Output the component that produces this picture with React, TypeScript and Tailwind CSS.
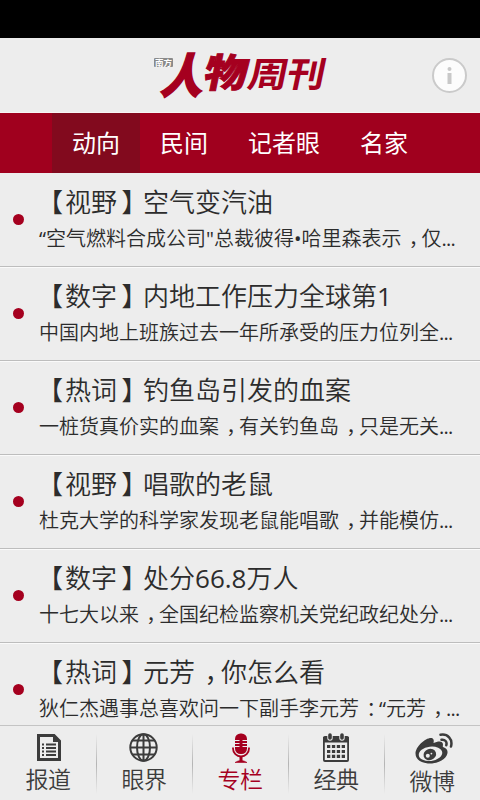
import type { ReactNode } from 'react';

const tabs = ['动向', '民间', '记者眼', '名家'];

const articles = [
  { title: '【视野】空气变汽油', summary: '“空气燃料合成公司"总裁彼得•哈里森表示，仅...' },
  { title: '【数字】内地工作压力全球第1', summary: '中国内地上班族过去一年所承受的压力位列全...' },
  { title: '【热词】钓鱼岛引发的血案', summary: '一桩货真价实的血案，有关钓鱼岛，只是无关...' },
  { title: '【视野】唱歌的老鼠', summary: '杜克大学的科学家发现老鼠能唱歌，并能模仿...' },
  { title: '【数字】处分66.8万人', summary: '十七大以来，全国纪检监察机关党纪政纪处分...' },
  { title: '【热词】元芳，你怎么看', summary: '狄仁杰遇事总喜欢问一下副手李元芳：“元芳，...' },
];

const navItems = [
  { label: '报道', icon: <ReportIcon /> },
  { label: '眼界', icon: <GlobeIcon /> },
  { label: '专栏', icon: <MicIcon />, active: true },
  { label: '经典', icon: <CalendarIcon /> },
  { label: '微博', icon: <WeiboIcon />, low: true },
];

// Half-width glyphs, each padded back to a full em
const punctuation: Record<string, string> = {
  '，': "inline-block w-[1em] pl-[0.36em] [font-feature-settings:'halt']",
  '：': "inline-block w-[1em] pl-[0.36em] [font-feature-settings:'halt']",
  '【': "inline-block w-[1em] pl-[0.42em] [font-feature-settings:'halt']",
  '】': "inline-block w-[1em] pl-[0.17em] [font-feature-settings:'halt']",
  '...': 'font-normal -tracking-[0.8px]',
};

export default function App() {
  return (
    <div className="w-[480px] h-[800px] flex flex-col overflow-hidden bg-[#ededed] text-[#2c2c2c] font-[350] font-['Open_Sans','Noto_Sans_CJK_SC',sans-serif]">
      <div className="h-[38px] shrink-0 bg-black" />
      <Header />
      <nav className="h-[60px] shrink-0 flex justify-center bg-[#a0001e]">
        {tabs.map((tab, i) => (
          <button
            key={tab}
            className={`px-5 text-[24px] leading-[60px] font-normal text-white whitespace-nowrap ${i === 0 ? 'bg-[#820a1e]' : ''}`}
          >
            {tab}
          </button>
        ))}
      </nav>
      <main className="flex-1 min-h-0 overflow-hidden">
        {articles.map(a => (
          <ArticleRow key={a.title} title={a.title} summary={a.summary} />
        ))}
      </main>
      <footer className="h-[75px] shrink-0 flex border-t border-[#c4c4c4]">
        {navItems.map((item, i) => (
          <NavItem key={item.label} label={item.label} icon={item.icon} active={item.active} low={item.low} divider={i > 0} />
        ))}
      </footer>
    </div>
  );
}

function Header() {
  return (
    <header className="h-[75px] shrink-0 flex items-center border-b border-[#f8f4f4]">
      <div className="w-[140px]" />
      <Logo />
      <div className="flex-1" />
      <svg className="w-9 h-9 mr-[13px]" viewBox="0 0 36 36">
        <circle cx="18.5" cy="18.5" r="16.5" fill="#fcfcfc" stroke="#cacaca" strokeWidth="2" />
        <circle cx="18.5" cy="12" r="2" fill="#c8c8c8" />
        <rect x="16.5" y="16" width="4" height="11" fill="#c8c8c8" />
      </svg>
    </header>
  );
}

// Slanted masthead, one transform per character
function Logo() {
  return (
    <svg className="w-[200px] h-[74px] overflow-visible font-['Noto_Sans_CJK_SC',sans-serif]" viewBox="0 0 200 74">
      <rect x="14" y="20" width="19" height="9" rx="1" fill="#8a8a8a" />
      <text x="15" y="28" fontSize="8.5" fontWeight="700" fill="#fff">南方</text>
      <g fill="#a5001f" stroke="#a5001f" fontWeight="900">
        <text transform="matrix(1.04 0 -0.32 1.17 20 54.5)" fontSize="40" strokeWidth="1.5">人</text>
        <text transform="matrix(1.08 0 -0.2 0.97 62 48.5)" fontSize="40" strokeWidth="1">物</text>
      </g>
      <g fill="#a5001f" fontWeight="600">
        <text transform="matrix(1.12 0 -0.2 0.97 106 49)" fontSize="36">周</text>
        <text transform="matrix(1.06 0 -0.2 0.97 145 49)" fontSize="36">刊</text>
      </g>
    </svg>
  );
}

function PunctuatedText({ text }: { text: string }) {
  const parts: ReactNode[] = text.split(/([，：【】]|\.{3}|[\d."“•]+)/).map((part, i) => {
    if (punctuation[part]) return <span key={i} className={punctuation[part]}>{part}</span>;
    return /^[\d."“•]/.test(part) ? <span key={i} className="font-normal">{part}</span> : part;
  });
  return <>{parts}</>;
}

function ArticleRow({ title, summary }: { title: string; summary: string }) {
  return (
    <article className="h-[94px] flex items-center border-b border-[#bdbdbd] shadow-[0_1px_0_#fafafa]">
      <div className="size-[11px] ml-[13px] mr-[15px] shrink-0 rounded-full bg-[#a5001f]" />
      <div className="h-full min-w-0 pt-[11px] whitespace-nowrap">
        <h2 className="h-[37px] text-[26px] leading-[36px]"><PunctuatedText text={title} /></h2>
        <p className="h-[36px] text-[20px] leading-[36px]"><PunctuatedText text={summary} /></p>
      </div>
    </article>
  );
}

type NavItemProps = { label: string; icon: ReactNode; active?: boolean; low?: boolean; divider: boolean };

function NavItem({ label, icon, active, low, divider }: NavItemProps) {
  return (
    <button className={`w-24 flex items-stretch ${active ? 'text-[#a5001f]' : 'text-[#3c3c3c]'}`}>
      <span className={`w-px h-[60px] mt-2 bg-linear-to-b from-transparent to-transparent ${divider ? 'via-[#b4b4b4]' : ''}`} />
      <span className="flex-1 flex flex-col items-center pt-[5px] -ml-px">
        <span className={`flex items-center justify-center ${low ? 'h-[35px]' : 'h-[33px]'}`}>{icon}</span>
        <span className="text-[23px] leading-[30px] -tracking-[0.5px]">{label}</span>
      </span>
    </button>
  );
}

function ReportIcon() {
  return (
    <svg className="w-6 h-[27px] ml-px" viewBox="0 0 24 27" fill="none" stroke="currentColor">
      <path d="M1.5 1.5H17L22.5 7V25.5H1.5Z" strokeWidth="3" />
      <path d="M16 1V8H23Z" fill="currentColor" stroke="none" />
      <path d="M5 10.5H7M9 10.5H19M5 14H7M9 14H19M5 17.5H7M9 17.5H19M5 21H7M9 21H19" strokeWidth="1.8" />
    </svg>
  );
}

function GlobeIcon() {
  return (
    <svg className="size-[29px] mr-px" viewBox="0 0 29 29" fill="none" stroke="currentColor" strokeWidth="2">
      <circle cx="14.5" cy="14.5" r="13.2" />
      <ellipse cx="14.5" cy="14.5" rx="6.5" ry="13.2" />
      <path d="M14.5 1V28M1 14.5H28M3.5 7.5H25.5M3.5 21.5H25.5" />
    </svg>
  );
}

function MicIcon() {
  return (
    <svg className="w-[18px] h-[30px] ml-[2px]" viewBox="0 0 18 30" fill="none" stroke="currentColor">
      <rect x="3" y="0.5" width="12" height="20.5" rx="5.5" fill="currentColor" stroke="none" />
      <path d="M3 7.5H7.5M10.5 7.5H15M3 10.5H7.5M10.5 10.5H15M3 13.5H7.5M10.5 13.5H15" stroke="#ededed" strokeWidth="1.2" />
      <path d="M1 14.5V15.5A8 8 0 0 0 17 15.5V14.5" strokeWidth="1.8" />
      <path d="M9 23V28" strokeWidth="3" />
      <path d="M3 29.5Q9 25.5 15 29.5Z" fill="currentColor" strokeWidth="0.6" />
    </svg>
  );
}

function CalendarIcon() {
  return (
    <svg className="w-[26px] h-[29px]" viewBox="0 0 26 29">
      <rect x="0.9" y="4" width="24.2" height="24" rx="1" fill="none" stroke="currentColor" strokeWidth="1.8" />
      <path d="M0 4H26V9.5H0Z" fill="currentColor" />
      <path d="M7 2.5V5M19 2.5V5" stroke="#ededed" strokeWidth="5.4" strokeLinecap="round" />
      <path d="M7 2V5M19 2V5" stroke="currentColor" strokeWidth="3.6" strokeLinecap="round" />
      <path d="M4 13.5H22M4 18.5H22M4 23.3H22" stroke="currentColor" strokeWidth="3.2" strokeDasharray="3.3 1.6" />
    </svg>
  );
}

function WeiboIcon() {
  return (
    <svg className="w-[38px] h-[31px] ml-[3px]" viewBox="0 0 38 31">
      <path d="M16 5C18 5 19.5 6.5 18.5 10C23 8 28 7.5 28 11.5C28 12.5 27.5 13.5 28 14C31 15 33 17 32.5 20C31.5 26 23.5 30.5 15 30.5C7 30.5 0.5 27 0.5 20.5C0.5 14 10 5 16 5Z" fill="currentColor" />
      <ellipse cx="15.5" cy="20.8" rx="11.8" ry="7.2" fill="#ededed" transform="rotate(-7 15.5 20.8)" />
      <ellipse cx="14.8" cy="21.5" rx="6.4" ry="5.6" fill="currentColor" transform="rotate(-18 14.8 21.5)" />
      <circle cx="12.8" cy="22.8" r="2" fill="#ededed" />
      <circle cx="16.4" cy="20.6" r="0.9" fill="#ededed" />
      <path d="M25.5 1.8C32.5 0.5 38 6 36 13.5M26.5 6.8C30 6.2 32.3 8.8 31.3 12.2" fill="none" stroke="currentColor" strokeWidth="2.5" strokeLinecap="round" />
    </svg>
  );
}
